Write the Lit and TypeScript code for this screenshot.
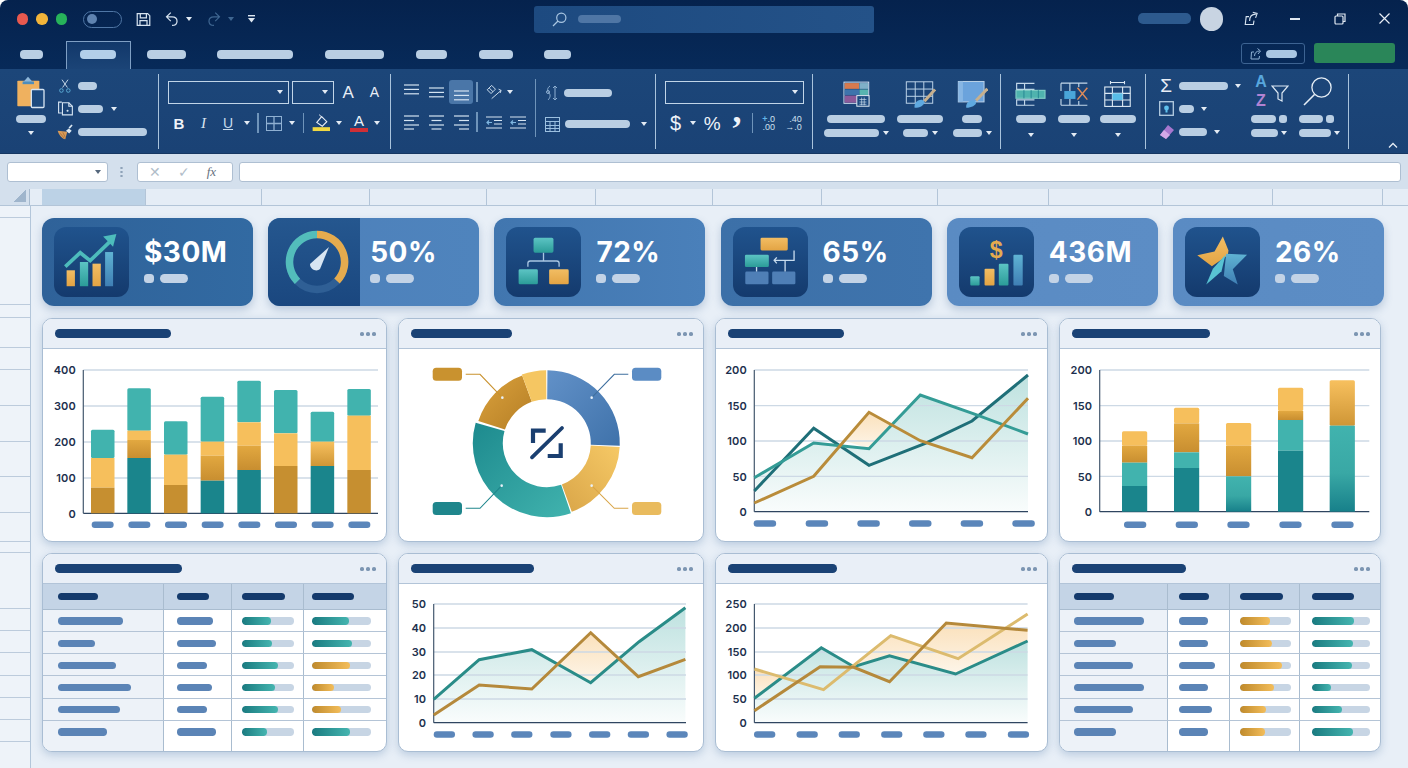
import { LitElement, html, svg, css } from "lit";
import { customElement } from "lit/decorators.js";

const pill = (w: number) => html`<span class="pill" style="width:${w}px"></span>`;
const caret = html`<span class="caret"></span>`;

/* ---------- ribbon icons ---------- */
const I = {
  save: html`<svg width="15" height="15" viewBox="406 35 49 47" fill="none" stroke="#d5e2ef" stroke-width="4"><path d="M410 39h34l7 7v32h-41z"/><path d="M420 39v14h20V39M419 78V62h23v16"/></svg>`,
  undo: html`<svg width="14" height="16" viewBox="492 34 46 50" fill="none" stroke="#d5e2ef" stroke-width="4"><path d="M511 38 497 52l14 14M497 52h18c22 0 22 28 0 28"/></svg>`,
  redo: html`<svg width="14" height="16" viewBox="602 34 46 50" fill="none" stroke="#3f6691" stroke-width="4"><path d="M629 38l14 14-14 14M643 52h-18c-22 0-22 28 0 28"/></svg>`,
  custom: html`<svg width="7" height="9" viewBox="0 0 7 9"><rect width="7" height="1.4" fill="#dfe8f2"/><path d="M0 3h7L3.5 7.5z" fill="#dfe8f2"/></svg>`,
  search: html`<svg width="15" height="15" viewBox="0 0 15 15" fill="none" stroke="#a9c6e2" stroke-width="1.2"><circle cx="9.3" cy="5.7" r="4.6"/><path d="M6 9 1 14"/></svg>`,
  share: html`<svg width="15" height="15" viewBox="730 35 48 46" fill="none" stroke="#d5e2ef" stroke-width="3.6"><path d="M746 52h-9l-3 25h26l2-12"/><path d="M748 66c0-14 8-22 20-22M758 38l14 4-5 14"/></svg>`,
  restore: html`<svg width="12" height="12" viewBox="0 0 12 12" fill="none" stroke="#dfe8f2" stroke-width="1.2"><rect x="1" y="3" width="8" height="8" rx="1"/><path d="M3.5 3V1h7.5v7.5H9"/></svg>`,
  close: html`<svg width="11" height="11" viewBox="0 0 11 11" stroke="#e8eef6" stroke-width="1.2"><path d="M.5.5l10 10M10.500.5l-10 10"/></svg>`,
  shareBtn: html`<svg width="12" height="12" viewBox="0 0 12 12" fill="none" stroke="#8fb0d2" stroke-width="1"><path d="M4 4H1.500L1 11h8l.5-3"/><path d="M4.500 8c0-3 2-5 5-5M7.500 .5l3 2.500-2.500 3"/></svg>`,
  clipboard: html`<svg width="30" height="33" viewBox="52 230 90 98"><rect x="56" y="244" width="66" height="76" rx="2" fill="#efb15f"/><path d="M70 252l18-20 18 20z" fill="#8fb7d9"/><rect x="72" y="246" width="34" height="8" fill="#4e8dbb"/><rect x="98" y="270" width="38" height="54" rx="3" fill="#1d4a7f" stroke="#d5e4f2" stroke-width="4"/></svg>`,
  cut: html`<svg width="12" height="16" viewBox="172 228 40 50" fill="none" stroke="#d5e4f2" stroke-width="3"><path d="M182 232l18 26M202 232l-18 26"/><g stroke="#5fb0d9"><circle cx="180" cy="268" r="6"/><circle cx="203" cy="268" r="6"/></g></svg>`,
  copy: html`<svg width="16" height="15" viewBox="166 303 50 46" fill="none" stroke="#d5e4f2" stroke-width="3.500"><path d="M181 306h-10v34h10"/><path d="M183 308h20l11 11v27h-31z"/><path d="M203 308v11h11"/><circle cx="199" cy="333" r="1.500" fill="#d5e4f2"/></svg>`,
  brush: html`<svg width="16" height="16" viewBox="168 372 50 48"><path d="M170 392l30 3-6 24c-12-3-20-14-24-27z" fill="#d79a58"/><path d="M196 392l9-7 9 7-8 9z" fill="#dbe7f1"/><path d="M206 384l9-10" stroke="#dbe7f1" stroke-width="5"/><path d="M178 400l13 16M186 397l8 16" stroke="#a56f3a" stroke-width="2.500"/></svg>`,
  borders: html`<svg width="16" height="15" viewBox="0 0 16 15" fill="none" stroke="#8fb0d2" stroke-width="1"><rect x=".5" y=".5" width="15" height="14"/><path d="M8 0v15M0 7.500h16" stroke-width="1.300"/></svg>`,
  fill: html`<svg width="18" height="18" viewBox="930 344 56 56"><path d="M945 370l15-18 16 16-14 14z" fill="none" stroke="#e8eef6" stroke-width="3.500"/><path d="M952 346l8 7" stroke="#e8eef6" stroke-width="3"/><rect x="932" y="385" width="54" height="12" fill="#f0d843"/></svg>`,
  orient: html`<svg width="17" height="16" viewBox="1452 250 54 50" fill="none" stroke="#d5e4f2" stroke-width="3"><path d="M1456 268l14-14 12 12-14 14zM1462 262l12 12"/><path d="M1470 296l30-26M1492 266l8 4-3 8"/></svg>`,
  wrap: html`<svg width="14" height="16" viewBox="0 0 14 16" fill="none" stroke="#8fb0d2" stroke-width="1"><path d="M5 1C2 3 2 6 4 8c2 2 1 5-1 7"/><path d="M10 1v14M8 3l2-2 2 2M8 13l2 2 2-2"/><circle cx="3" cy="7" r="1.500"/></svg>`,
  merge: html`<svg width="15" height="15" viewBox="0 0 15 15" fill="none" stroke="#9cc0e0" stroke-width="1"><rect x=".5" y=".5" width="14" height="14"/><path d="M0 4.500h15M0 8.500h15M0 11.500h15M5 4v11M10 4v11"/></svg>`,
  styles1: html`<svg width="27" height="27" viewBox="963 238 84 82"><rect x="966" y="242" width="77" height="66" fill="#1d4a7f" stroke="#d5e4f2" stroke-width="3"/><rect x="968" y="245" width="45" height="18" fill="#d67a4e"/><rect x="1014" y="245" width="27" height="18" fill="#7fb0c8"/><rect x="968" y="265" width="45" height="17" fill="#3e74ac"/><rect x="1014" y="265" width="27" height="17" fill="#58b4b0"/><rect x="968" y="284" width="40" height="22" fill="#8c5a9a"/><rect x="1006" y="284" width="38" height="33" fill="#1d4a7f" stroke="#e6eef6" stroke-width="3"/><path d="M1014 296h22M1014 304h22M1014 311h22M1021 290v24M1029 290v24" stroke="#d5e4f2" stroke-width="2"/></svg>`,
  styles2: html`<svg width="31" height="28" viewBox="1153 238 94 84" fill="none"><rect x="1157" y="243" width="80" height="65" stroke="#bcd3e8" stroke-width="3"/><path d="M1157 265h80M1157 287h80M1184 243v65M1210 243v65" stroke="#bcd3e8" stroke-width="3"/><path d="M1244 266l-32 36" stroke="#c7b08e" stroke-width="9"/><path d="M1182 322c-2-14 8-26 24-24l6 6c0 10-14 18-30 18z" fill="#5fa9e0"/></svg>`,
  styles3: html`<svg width="31" height="28" viewBox="1306 238 94 84" fill="none"><rect x="1310" y="242" width="78" height="62" fill="#6ba3dc" stroke="#bcd3e8" stroke-width="3"/><rect x="1310" y="242" width="14" height="62" fill="#87b6e4"/><path d="M1398 264l-34 36" stroke="#c7b08e" stroke-width="9"/><path d="M1334 322c-2-14 8-24 24-22l6 6c0 8-14 16-30 16z" fill="#5fa9e0"/></svg>`,
  ins: html`<svg width="31" height="24" viewBox="43 238 94 74" fill="none" stroke="#c3d8ea" stroke-width="3.500"><path d="M102 243H48v18h54M102 293H48v16h54"/><path d="M72 243v18M72 293v16"/><rect x="46" y="264" width="88" height="24" fill="#4fb3ae" stroke="#80ccc6"/><path d="M70 264v24M92 264v24M114 264v24" stroke="#2f8e98"/></svg>`,
  del: html`<svg width="29" height="25" viewBox="175 238 88 74" fill="none" stroke="#c3d8ea" stroke-width="3.500"><path d="M178 242h80M178 309h80M178 242v24M178 290v19M205 242v24M205 290v19M232 242v12M232 296v13"/><rect x="188" y="266" width="34" height="24" fill="#4aa6d9" stroke="none"/><path d="M228 256l30 36M258 256l-30 36" stroke="#dd8a5a" stroke-width="4.500"/></svg>`,
  format: html`<svg width="29" height="29" viewBox="306 230 88 88" fill="none" stroke="#dce8f3" stroke-width="3.500"><path d="M328 238h44M328 233v10M372 233v10"/><rect x="310" y="252" width="80" height="61"/><path d="M310 272h80M310 293h80M334 252v61M366 252v61"/><rect x="334" y="272" width="32" height="21" fill="#58bde8" stroke="none"/></svg>`,
  box: html`<svg width="15" height="15" viewBox="0 0 15 15" fill="none"><rect x=".7" y=".7" width="13.600" height="13.600" stroke="#b5cde2" stroke-width="1.300"/><circle cx="7.500" cy="7" r="2.400" fill="#5fc1ee"/><rect x="6.500" y="9" width="2" height="2.500" fill="#5fc1ee"/></svg>`,
  eraser: html`<svg width="15" height="14" viewBox="0 0 15 14"><path d="M9 0l6 5-8 9-6-4z" fill="#a777cf"/><path d="M1 10l4-5 6 5-4 4z" fill="#d3a9e8"/></svg>`,
  funnel: html`<svg class="fn" width="18" height="17" viewBox="0 0 18 17" fill="none" stroke="#dce8f3" stroke-width="1.200"><path d="M1 1h16l-6 7v8l-4-2V8z"/></svg>`,
  find: html`<svg width="29" height="29" viewBox="0 0 29 29" fill="none" stroke="#e6eef6" stroke-width="1.300"><circle cx="18.500" cy="10.500" r="9.600"/><path d="M11.500 17.500 1 28" stroke-width="1.600"/></svg>`,
  chevron: html`<svg width="10" height="6" viewBox="0 0 10 6" fill="none" stroke="#e6eef6" stroke-width="1.300"><path d="M1 5.500 5 1.500l4 4"/></svg>`,
};

/* horizontal-alignment icons: four lines, alternate ones short */
const alignIcon = (a: "l" | "c" | "r") =>
  html`<svg width="15" height="15" viewBox="0 0 15 15" stroke="#d5e4f2" stroke-width="1.200">${[1, 5.5, 10, 14].map((y, i) => {
    const w = i % 2 === 1 ? 10 : 15;
    const x = a === "l" ? 0 : a === "r" ? 15 - w : (15 - w) / 2;
    return svg`<line x1=${x} x2=${x + w} y1=${y} y2=${y} />`;
  })}</svg>`;
/* vertical-alignment icons: three lines that sit high, middle or low in the cell */
const vAlignIcon = (top: number) =>
  html`<svg width="15" height="20" viewBox="0 0 15 20" stroke="#d5e4f2" stroke-width="1.200">${[0, 4.4, 8.8].map(
    (d) => svg`<line x1="0" x2="15" y1=${top + d} y2=${top + d} />`,
  )}</svg>`;
const indentIcon = html`<svg width="16" height="13" viewBox="0 0 16 13" stroke="#d5e4f2" stroke-width="1.200"><path d="M0 1h16M8 4.500h8M8 8h8M0 12h16"/><path d="M6 6.500H1M3 4.500l-2 2 2 2" stroke="#7fb6e0" fill="none"/></svg>`;

/* ---------- KPI icons (drawn in reference-zoom units) ---------- */
const tile = (x: number, body: unknown) =>
  html`<svg width="75" height="70" viewBox="${x} 65 226 210">${body}</svg>`;
const defsKpi = (id: string) => svg`<defs>
  <linearGradient id="t${id}" x1="0" y1="0" x2="0" y2="1"><stop offset="0" stop-color="#5cc4c4"/><stop offset="1" stop-color="#2b9c98"/></linearGradient>
  <linearGradient id="o${id}" x1="0" y1="0" x2="0" y2="1"><stop offset="0" stop-color="#f2bd63"/><stop offset="1" stop-color="#e3a444"/></linearGradient>
  <linearGradient id="b${id}" x1="0" y1="0" x2="0" y2="1"><stop offset="0" stop-color="#5fb3d3"/><stop offset="1" stop-color="#3f7fb4"/></linearGradient>
</defs>`;
const kpiIcons = [
  tile(162, svg`${defsKpi("a")}
    <rect x="200" y="195" width="25" height="48" fill="url(#oa)"/><rect x="240" y="170" width="25" height="73" fill="url(#ta)"/>
    <rect x="278" y="175" width="25" height="68" fill="url(#oa)"/><rect x="316" y="140" width="24" height="103" fill="url(#ba)"/>
    <path d="M196 184l45-42 30 24 58-56" fill="none" stroke="#4dbcbc" stroke-width="11"/><path d="M350 86l-40 7 30 31z" fill="#4dbcbc"/>`),
  html`<svg width="70" height="70" viewBox="0 0 70 70" fill="none">
    <circle cx="35" cy="35" r="27.500" stroke="#2f5f95" stroke-width="7.500"/>
    <path d="M15.500 54.400A27.500 27.500 0 0 1 35 7.500" stroke="#53bdbb" stroke-width="7.500"/>
    <path d="M35 7.500A27.500 27.500 0 0 1 55 54" stroke="#e5ab4e" stroke-width="7.500"/>
    <path d="M47 20 38 42c-3 3-10 1-10-5z" fill="#d8e5f2"/></svg>`,
  tile(47, svg`${defsKpi("c")}
    <rect x="130" y="97" width="60" height="45" rx="5" fill="url(#tc)"/><rect x="85" y="192" width="58" height="45" rx="4" fill="url(#tc)"/><rect x="177" y="192" width="59" height="45" rx="4" fill="url(#oc)"/>
    <path d="M160 142v25M113 184v-10q0-7 7-7h80q7 0 7 7v10" fill="none" stroke="#a9c6e2" stroke-width="4"/>`),
  tile(725, svg`${defsKpi("d")}
    <rect x="808" y="97" width="82" height="38" rx="4" fill="url(#od)"/><rect x="761" y="148" width="72" height="37" rx="4" fill="url(#td)"/>
    <rect x="762" y="199" width="70" height="38" rx="4" fill="#4f7fb6"/><rect x="843" y="199" width="70" height="38" rx="4" fill="#4f7fb6"/>
    <path d="M909 135v30h-60M857 156l-8 9 8 9M882 165v34M796 185v14" fill="none" stroke="#c8dcee" stroke-width="4"/>`),
  tile(53, svg`${defsKpi("e")}
    <text x="165" y="157" text-anchor="middle" class="dollar">$</text>
    <rect x="87" y="213" width="28" height="28" rx="3" fill="url(#te)"/><rect x="130" y="190" width="30" height="51" rx="3" fill="url(#oe)"/>
    <rect x="173" y="175" width="29" height="66" rx="3" fill="url(#te)"/><rect x="217" y="148" width="28" height="93" rx="3" fill="url(#be)"/>`),
  tile(731, svg`${defsKpi("f")}
    <path d="M845 93l17 42-2 15-48 33-44-33 52-12z" fill="url(#of)"/>
    <path d="M855 145l63 3-43 44 15 46-42-26z" fill="url(#bf)"/><path d="M795 238l20-48 38-42-12 50z" fill="#58c3d3"/>`),
];

/* ---------- charts ---------- */
const C = { teal: "#41b3ae", dteal: "#1a858c", yel: "#f6bf5c", gold: "#c68f30" };
const colX = [42, 398, 715, 1059];
const colW = [345, 306, 333, 322];

type Seg = [number, number, string];

function frame(col: number, top: number, h: number, body: unknown) {
  return html`<svg class="plot" width=${colW[col] - 2} height=${h} viewBox="${colX[col] + 1} ${top} ${colW[col] - 2} ${h}">
    <defs>
      <linearGradient id="area" x1="0" y1="0" x2="0" y2="1"><stop offset="0" stop-color="#3aa6a0" stop-opacity=".33"/><stop offset="1" stop-color="#3aa6a0" stop-opacity=".03"/></linearGradient>
      <linearGradient id="warm" x1="0" y1="0" x2="0" y2="1"><stop offset="0" stop-color="#f6c277" stop-opacity=".5"/><stop offset="1" stop-color="#f6c277" stop-opacity=".16"/></linearGradient>
      <linearGradient id="tealfade" x1="0" y1="0" x2="0" y2="1"><stop offset="0" stop-color="#41b3ae"/><stop offset=".55" stop-color="#39a8a5"/><stop offset="1" stop-color="#17808a"/></linearGradient>
      <linearGradient id="goldfade" x1="0" y1="0" x2="0" y2="1"><stop offset="0" stop-color="#e2a840"/><stop offset="1" stop-color="#c88e30"/></linearGradient>
      <linearGradient id="yelfade" x1="0" y1="0" x2="0" y2="1"><stop offset="0" stop-color="#f7c05e"/><stop offset="1" stop-color="#cf9636"/></linearGradient>
      <linearGradient id="blue" x1="0" y1="0" x2="1" y2="1"><stop offset="0" stop-color="#6291c8"/><stop offset="1" stop-color="#3f72aa"/></linearGradient>
      <linearGradient id="yelseg" x1="1" y1="0" x2="0" y2="1"><stop offset="0" stop-color="#f6c966"/><stop offset="1" stop-color="#d9a548"/></linearGradient>
      <linearGradient id="tealseg" x1="0" y1="0" x2="1" y2="1"><stop offset="0" stop-color="#1d8a8e"/><stop offset="1" stop-color="#41b3ae"/></linearGradient>
      <linearGradient id="goldseg" x1="1" y1="1" x2="0" y2="0"><stop offset="0" stop-color="#b57e25"/><stop offset="1" stop-color="#dba23d"/></linearGradient>
    </defs>${body}</svg>`;
}

function axes(x0: number, x1: number, ticks: [string, number][]) {
  const base = ticks[ticks.length - 1][1];
  return svg`
    ${ticks.slice(0, -1).map(([, y]) => svg`<line x1=${x0} x2=${x1} y1=${y} y2=${y} stroke="#cdd9e5" stroke-width="1.300"/>`)}
    ${ticks.map(([t, y]) => svg`<text class="tick" x=${x0 - 7.500} y=${y + 4.200} text-anchor="end">${t}</text>`)}
    <line x1=${x0} x2=${x0} y1=${ticks[0][1]} y2=${base} stroke="#44586e" stroke-width="1.200"/>
    <line x1=${x0} x2=${x1} y1=${base} y2=${base} stroke="#2f4560" stroke-width="1.300"/>`;
}
const xPills = (xs: number[], w: number, y: number) =>
  xs.map((x) => svg`<rect x=${x} y=${y} width=${w} height="6.500" rx="3.200" fill="#5b86ba"/>`);

function barChart(col: number, top: number, h: number, ox: number, x0: number, x1: number, ticks: [string, number][], bw: number, bars: [number, Seg[]][], labels: number[], lw: number) {
  const m = (z: number) => z / 3 + 315;
  return frame(col, top, h, svg`
    ${axes(x0, x1, ticks)}
    ${bars.map(([bx, segs]) => svg`
      ${segs.map(([a, b, f], i) => svg`<rect x=${bx / 3 + ox} y=${m(a)} width=${bw} height=${(b - a) / 3} fill=${f} rx=${i === 0 ? 1.500 : 0}/>`)}`)}
    ${xPills(labels.map((x) => x / 3 + ox), lw, 521.4)}`);
}

const pts = (a: number[][], ox: number, oy: number, sx: number) =>
  a.map(([x, y]) => `${(x / sx + ox).toFixed(1)},${(y / 3 + oy).toFixed(1)}`).join(" ");

function lineChart(col: number, top: number, h: number, ox: number, oy: number, sx: number, x0: number, x1: number, ticks: [string, number][], areas: [number[][], string][], lines: [number[][], string][], labels: number[], lw: number, ly: number) {
  return frame(col, top, h, svg`
    ${areas.map(([a, f]) => svg`<polygon points=${pts(a, ox, oy, sx)} fill=${f}/>`)}
    ${axes(x0, x1, ticks)}
    ${lines.map(([a, c]) => svg`<polyline points=${pts(a, ox, oy, sx)} fill="none" stroke=${c} stroke-width="3"/>`)}
    ${xPills(labels.map((x) => x / sx + ox), lw, ly)}`);
}

const arc = (cx: number, cy: number, R: number, r: number, a: number, b: number) => {
  const p = (rad: number, d: number) => {
    const t = ((d - 90) * Math.PI) / 180;
    return `${(cx + rad * Math.cos(t)).toFixed(2)} ${(cy + rad * Math.sin(t)).toFixed(2)}`;
  };
  const lg = b - a > 180 ? 1 : 0;
  return `M${p(R, a)}A${R} ${R} 0 ${lg} 1 ${p(R, b)}L${p(r, b)}A${r} ${r} 0 ${lg} 0 ${p(r, a)}Z`;
};

const donut = () => {
  const z = (x: number, y: number) => `${(x / 3 + 395).toFixed(1)} ${(y / 3 + 315).toFixed(1)}`;
  const cx = 546.8, cy = 443.2, R = 73, r = 44;
  const leg = (x: number, y: number, f: string) => svg`<rect x=${x} y=${y} width="29.300" height="13" rx="3.500" fill=${f}/>`;
  const lead = (d: string, c: string) => svg`<path d=${d} fill="none" stroke=${c} stroke-width="1.100"/>`;
  const tip = (x: number, y: number) => svg`<circle cx=${x / 3 + 395} cy=${y / 3 + 315} r="1.300" fill="#e8f1f8"/>`;
  return frame(1, 349, 192, svg`
    <path d=${arc(cx, cy, R, r, 0.5, 92)} fill="url(#blue)"/>
    <path d=${arc(cx, cy, R, r, 93, 160)} fill="url(#yelseg)"/>
    <path d=${arc(cx, cy, R + 1, r, 161, 286)} fill="url(#tealseg)"/>
    <path d=${arc(cx, cy, R - 1, r, 288, 340)} fill="url(#goldseg)"/>
    <path d=${arc(cx, cy, R, r, 340, 359.500)} fill="#f5c662"/>
    ${leg(432.700, 367.700, "#c9922f")}${leg(632, 367.700, "#5b8cc4")}${leg(432.700, 502, "#1f868c")}${leg(632, 502, "#e9bb5e")}
    ${lead(`M${z(212, 178)}L${z(255, 178)}L${z(322, 248)}`, "#c9922f")}
    ${lead(`M${z(700, 178)}L${z(658, 178)}L${z(590, 248)}`, "#3f6f9f")}
    ${lead(`M${z(212, 580)}L${z(255, 580)}L${z(320, 512)}`, "#1f868c")}
    ${lead(`M${z(700, 580)}L${z(658, 580)}L${z(590, 512)}`, "#d9a548")}
    ${tip(322, 248)}${tip(590, 248)}${tip(320, 512)}${tip(590, 512)}
    <path d="M${z(452, 347)}L${z(414, 347)}L${z(414, 384)}" fill="none" stroke="#1a3f70" stroke-width="4.200"/>
    <path d="M${z(497, 385)}L${z(497, 423)}L${z(458, 423)}" fill="none" stroke="#1a3f70" stroke-width="4.200"/>
    <path d="M${z(411, 427)}L${z(501, 339)}" fill="none" stroke="#1a3f70" stroke-width="3.800" stroke-linecap="round"/>`);
};

/* tables */
type Bar = [number, "t" | "g"];
interface Tbl { cols: number[]; pad: number[]; head: number[]; c1: number[]; c2: number[]; t3: number; t4: number; c3: Bar[]; c4: Bar[]; }
const T1: Tbl = {
  cols: [121, 67.6, 72.7, 82.7], pad: [14.6, 13.3, 10.7, 8],
  head: [40, 32, 42.500, 42], c1: [65, 37, 58, 73, 62, 49], c2: [36, 39, 30, 35, 30, 39], t3: 52, t4: 59,
  c3: [[29, "t"], [30, "t"], [36, "t"], [33, "t"], [36, "t"], [25, "t"]],
  c4: [[37, "t"], [40, "t"], [38, "g"], [22, "g"], [29, "g"], [38, "t"]],
};
const T2: Tbl = {
  cols: [107.5, 62, 70, 80.5], pad: [14, 11, 10.500, 12.500],
  head: [40, 30, 43, 42], c1: [70, 42, 59, 70, 59, 42], c2: [29, 29, 36, 29, 33, 29], t3: 51, t4: 58,
  c3: [[30, "g"], [32, "g"], [42, "g"], [34, "g"], [26, "g"], [25, "g"]],
  c4: [[42, "t"], [41, "t"], [40, "t"], [19, "t"], [30, "t"], [41, "t"]],
};

const rowLines = [217.3, 305, 318, 348, 370, 405.7, 441.7, 477, 513, 541.7, 553, 609, 631, 653, 675.7, 698, 720, 741.7];
const colLines = [146, 262, 370, 487, 596, 713, 822, 938, 1049, 1163, 1273, 1383];
const tabs = [[20.3, 23], [80.3, 36, 1], [147.3, 38.4], [217.3, 76], [325.3, 59], [416.3, 31], [479, 33.700], [544.3, 27]];

@customElement("app-root")
export class AppRoot extends LitElement {
  static styles = css`
    :host { display: block; width: 1408px; height: 768px; overflow: hidden; font-family: "Liberation Sans", sans-serif; background: #fff; }
    .pill { display: block; height: 8px; border-radius: 4px; background: #b9cee3; flex: none; }
    .caret { display: block; flex: none; width: 0; height: 0; border-left: 3px solid transparent; border-right: 3px solid transparent; border-top: 4px solid #e3ebf4; }
    svg { display: block; flex: none; }

    /* title bar */
    .top { background: linear-gradient(#05224d, #072a59); border-radius: 8px 8px 0 0; }
    .title { height: 38px; display: grid; grid-template-columns: 534px 340.3px 1fr; align-items: center; }
    .tleft, .tright { display: flex; align-items: center; }
    .lights { display: flex; gap: 8px; margin-left: 16.500px; }
    .lights i { display: block; width: 11.500px; height: 11.500px; border-radius: 50%; }
    .toggle { width: 39px; height: 17px; margin-left: 16px; box-sizing: border-box; border: 1px solid #4f76a5; border-radius: 9px; display: flex; align-items: center; padding-left: 3px; }
    .toggle i { display: block; width: 10px; height: 10px; border-radius: 50%; background: #5f83b0; }
    .m14 { margin-left: 14px; } .m7 { margin-left: 7px; } .m16 { margin-left: 15px; }
    .dim { border-top-color: #3f6691; }
    .searchbox { height: 27px; background: linear-gradient(90deg, #1d4a80, #245288); border-radius: 3px; display: flex; align-items: center; padding-left: 18px; gap: 11px; }
    .searchbox .pill { background: #4f76a5; }
    .who { width: 53px; height: 11px; border-radius: 5px; background: #2d5a8e; margin-left: 264px; }
    .avatar { width: 23.400px; height: 23.400px; border-radius: 50%; background: #c8d4e2; margin-left: 8.600px; }
    .sh { margin-left: 21px; } .minim { width: 10px; height: 1.200px; background: #dfe8f2; margin-left: 31px; } .rs { margin-left: 34px; } .cl { margin-left: 33px; }

    .tabs { height: 31px; display: flex; align-items: flex-start; }
    .tab { margin-top: 12px; height: 8.700px; border-radius: 4px; background: #b9cee3; flex: none; }
    .tab.on { background: #b3cfe9; }
    .tabbox { flex: none; box-sizing: border-box; height: 28.300px; margin-top: 2.700px; border: 1px solid #7f9fc4; border-bottom: none; background: linear-gradient(#12386a, #1b4477); padding: 8.500px 0 0 13.300px; }
    .tabbox .tab { margin-top: 0; }
    .tabend { margin-left: auto; display: flex; gap: 9px; padding: 5.300px 13.300px 0 0; }
    .sharebtn { width: 64px; height: 20.700px; box-sizing: border-box; border: 1px solid #3d6392; border-radius: 3px; display: flex; align-items: center; padding-left: 8px; gap: 4px; }
    .sharebtn .pill { background: #a9c6e2; }
    .green { width: 80.400px; height: 20px; background: #2a8659; border-radius: 3px; }

    /* ribbon */
    .ribbon { height: 85px; box-sizing: border-box; padding-top: 5px; display: flex; background: linear-gradient(#1c4679, #1a4275); border-bottom: 1px solid #153661; }
    .grp { height: 75px; box-sizing: border-box; border-right: 1.500px solid #a9c3dc; flex: none; }
    .clipgrp { width: 159px; display: flex; padding-left: 16px; }
    .clipcol { width: 30px; display: flex; flex-direction: column; align-items: center; padding-top: 2px; }
    .clipcol .pill { margin-top: 6px; width: 30px; }
    .clipcol .caret { margin-top: 8px; }
    .tools { margin-left: 11px; }
    .ir { display: flex; align-items: center; height: 23px; gap: 8px; }
    .ir .ic { width: 15.500px; display: flex; justify-content: center; margin-right: -3px; flex: none; }

    .fontgrp { width: 232px; padding: 7px 0 0 8.500px; }
    .fontrow { display: flex; align-items: center; gap: 3px; }
    .sel { height: 22.700px; box-sizing: border-box; border: 1.300px solid #c1d5e8; display: flex; align-items: center; justify-content: flex-end; padding-right: 5px; }
    .gA { color: #e8eef6; line-height: 1; }
    .gA.big { font-size: 17px; margin-left: 6px; }
    .gA.small { font-size: 14px; margin-left: 13px; }
    .fontgrid { display: grid; grid-template-columns: 24px 25px 24px 13px 10px 22px 14px 9px 25px 12px 28px 8px; justify-items: center; align-items: center; height: 25px; margin-top: 7px; margin-left: -.500px; }
    .b { font-weight: 700; font-size: 15px; color: #eef3f9; }
    .i { font-style: italic; font-size: 15px; color: #dbe6f1; font-family: "Liberation Serif", serif; }
    .u { text-decoration: underline; font-size: 14px; color: #c6daec; }
    .vs { width: 1.300px; height: 20px; background: #6f94ba; }
    .colorA { display: flex; flex-direction: column; align-items: center; font-size: 15px; line-height: 14px; color: #eef3f9; }
    .colorA i { display: block; width: 18px; height: 4px; background: #cf2f36; }

    .aligngrp { width: 265px; display: flex; padding-left: 8px; }
    .ablock { width: 136px; padding-top: 6px; }
    .agrid1, .agrid2 { display: grid; justify-items: center; align-items: center; }
    .agrid1 { grid-template-columns: 24px 26px 24px 8px 26px 6px; height: 24.400px; }
    .agrid2 { grid-template-columns: 24px 26px 24px 8px 25px 24px; height: 24px; margin-top: 6px; }
    .active { width: 24px; height: 24.400px; background: #4a76a8; border-radius: 3px; display: flex; align-items: center; justify-content: center; }
    .subsep { width: 1.300px; height: 58px; background: #6f94ba; margin-top: 5px; flex: none; }
    .wrapcol { margin-left: 9px; padding-top: 7px; }
    .wr { display: flex; align-items: center; gap: 5px; height: 24px; }
    .wr + .wr { margin-top: 7px; }
    .wr .caret { margin-left: 6px; }

    .numgrp { width: 157px; padding: 7px 0 0 8.600px; }
    .numgrid { display: grid; grid-template-columns: 22px 13px 25px 25px 6.500px 25px 25px; justify-items: center; align-items: center; height: 25px; margin-top: 7px; }
    .cur { color: #eef3f9; font-size: 20px; line-height: 1; }
    .pct { color: #eef3f9; font-size: 19px; line-height: 1; }
    .comma { color: #eef3f9; font-size: 36px; line-height: 25px; font-weight: 700; font-family: "Liberation Serif", serif; transform: translateY(-13px); }
    .dec { color: #cfe0ef; font-size: 9px; line-height: 8.500px; text-align: right; }
    .dec b { color: #62b5e8; font-weight: 700; }

    .stackgrp { display: flex; padding: 0 0 0 8px; }
    .styles { width: 188px; } .cells { width: 145px; }
    .sc { display: flex; flex-direction: column; align-items: center; padding-top: 6px; flex: none; }
    .sc > svg { height: 28px; }
    .sc .r1 { margin-top: 7px; }
    .sc .r2 { margin-top: 6px; display: flex; align-items: center; gap: 4px; }
    .w70 { width: 70px; } .w58 { width: 58px; } .w46 { width: 46px; }
    .w43 { width: 43px; } .w44 { width: 44px; }
    .sc .under { margin-top: 10px; }

    .editgrp { width: 203px; display: flex; padding-left: 13px; }
    .ecol { width: 92px; flex: none; }
    .ecol .ir { gap: 6px; }
    .ecol .ir .ic { width: 14px; margin: 0; }
    .ecol .ir .caret { margin-left: 1px; }
    .sortcol { width: 48px; flex: none; padding-top: 3px; display: flex; flex-direction: column; gap: 6px; }
    .findcol { width: 40px; }
    .az { display: flex; align-items: flex-end; height: 29px; gap: 1px; }
    .az.findbox { padding-left: 3.500px; }
    .az .fn { margin-bottom: 4px; }
    .azt { display: flex; flex-direction: column; font: 700 16px/18.500px "Liberation Sans", sans-serif; width: 12px; align-items: center; align-self: flex-start; margin: -4px 3px 0 4px; }
    .azt b:first-child { color: #58a7dd; } .azt b:last-child { color: #b183d3; }
    .pr { display: flex; align-items: center; gap: 3px; }
    .pr.first { margin-top: 3px; }
    .dot { width: 8px; height: 8px; border-radius: 3px; background: #b9cee3; }
    .collapse { margin: 68px 0 0 39px; }

    /* formula bar */
    .formula { height: 35px; background: #d4e0ed; box-sizing: border-box; padding: 7.700px 6.700px 0; display: flex; }
    .fbox { height: 20.700px; box-sizing: border-box; background: #fff; border: 1px solid #aebfd2; border-radius: 3px; display: flex; align-items: center; }
    .name { width: 101px; justify-content: flex-end; padding-right: 6px; }
    .name .caret { border-top-color: #55677c; border-left-width: 3.500px; border-right-width: 3.500px; }
    .vdots { width: 3px; margin: 4px 13.500px 0 12.500px; height: 12px; background: radial-gradient(circle, #8ea2b8 1px, transparent 1.300px) 0 0/3px 4px; }
    .fbtns { width: 96.600px; padding-left: 11px; gap: 17px; color: #b1bdc9; font-size: 14px; }
    .fbtns em { font-family: "Liberation Serif", serif; color: #66717e; font-size: 13px; }
    .finput { width: 1162.700px; margin-left: 5.400px; }

    /* sheet */
    .colhead { height: 17px; display: flex; box-sizing: border-box; background: #e5edf6; border-bottom: 1px solid #b3c5d8; }
    .corner { width: 30px; flex: none; background: #d4e0ed; border-right: 1px solid #a8bbcf; box-sizing: border-box; display: flex; justify-content: flex-end; padding: 1px 3px 0 0; }
    .tri { width: 12px; height: 12px; background: linear-gradient(135deg, transparent 50%, #9fb5cc 50%); }
    .gap12 { width: 12px; flex: none; box-sizing: border-box; }
    .chead { box-sizing: border-box; border-right: 1px solid #b3c5d8; flex: none; }
    .chead.sel1 { background: #bcd2e6; }
    .sheet { display: flex; height: 562.700px; background: #e8eff7; }
    .rows { width: 31px; flex: none; box-sizing: border-box; border-right: 1.500px solid #b3c6da; background: #eef3f9; }
    .rowline { box-sizing: border-box; border-bottom: 1px solid #bccbdc; }
    .content { padding: 12.300px 0 0 11px; }
    .kpis { display: grid; grid-template-columns: repeat(6, 211px); gap: 15.200px; }
    .kpi { height: 88px; border-radius: 12px; box-sizing: border-box; padding: 8.700px 0 0 12px; display: flex; box-shadow: 0 4px 9px rgba(60, 100, 150, .28); color: #fff; overflow: hidden; }
    .kpi.gauge { padding: 0; }
    .tile { width: 75px; height: 70px; border-radius: 12px; background: linear-gradient(#20538d, #143a6d); flex: none; }
    .gaugebox { width: 92px; height: 88px; box-sizing: border-box; padding-left: 5px; background: linear-gradient(#25578f, #1a477f); flex: none; display: flex; align-items: center; justify-content: center; margin-right: 10px; }
    .ktext { margin-left: 15px; padding-top: 8px; }
    .gauge .ktext { margin-left: 0; padding-top: 17px; }
    .num { font: 700 28px/34px Inter, "Liberation Sans", sans-serif; letter-spacing: .5px; }
    .sub { display: flex; gap: 6px; margin-top: 5px; }
    .sub i { display: block; height: 9px; border-radius: 3.500px; background: #c3d3e6; width: 10px; }
    .sub i + i { width: 28px; border-radius: 4.500px; }

    .grid { display: grid; grid-template-columns: 345px 306px 333px 322px; grid-template-rows: 223.500px 199px; column-gap: 11px; row-gap: 11.500px; margin-top: 12px; }
    .card { background: #fff; border: 1px solid #a9bdd3; border-radius: 10px; box-sizing: border-box; overflow: hidden; box-shadow: 0 3px 8px rgba(70, 110, 160, .28); }
    .chd { height: 30px; box-sizing: border-box; background: #e9eff7; border-bottom: 1.500px solid #b2c4d8; display: flex; align-items: center; justify-content: space-between; padding: 0 10px 0 12px; }
    .ttl { display: block; height: 8.700px; border-radius: 4.300px; background: #1a4275; }
    .dots { display: flex; gap: 2.300px; }
    .dots i { display: block; width: 3.700px; height: 3.700px; border-radius: 50%; background: #7c95b2; }
    .plot .tick { font: 600 11px Inter, "Liberation Sans", sans-serif; fill: #1c2f4d; letter-spacing: .1px; }
    .dollar { font: 700 70px "Liberation Sans", sans-serif; fill: #e5ab4e; }

    .thead, .trow { display: grid; }
    .thead { height: 25.600px; background: #c4d4e6; border-bottom: 1px solid #a9bccf; box-sizing: border-box; }
    .thead > div { display: flex; align-items: center; border-right: 1px solid #a9bccf; box-sizing: border-box; }
    .thead > div:last-child, .trow > div:last-child { border-right: none; }
    .thead .tp { height: 7.300px; border-radius: 3.700px; background: #143a6c; display: block; }
    .trow { height: 22.200px; border-bottom: 1px solid #b4c4d6; box-sizing: border-box; }
    .trow.last { height: 31px; border-bottom: none; }
    .trow > div { border-right: 1px solid #a9bccf; box-sizing: border-box; padding-top: 7.500px; }
    .trow > div:first-child { background: #edf2f8; }
    .tp { height: 7.300px; border-radius: 3.700px; background: #5b84b6; display: block; }
    .track { height: 7.300px; border-radius: 3.700px; background: #c7d5e4; display: block; overflow: hidden; }
    .track i { display: block; height: 100%; border-radius: 3.700px; }
    .track i.t { background: linear-gradient(90deg, #1a7b80, #45b5b0); }
    .track i.g { background: linear-gradient(90deg, #bf8a2c, #f3bd5a); }
  `;

  private card(w: number, body: unknown) {
    return html`<div class="card">
      <div class="chd"><span class="ttl" style="width:${w}px"></span><span class="dots"><i></i><i></i><i></i></span></div>
      ${body}
    </div>`;
  }

  private table(t: Tbl) {
    const gc = `grid-template-columns:${t.cols.map((c) => c + "px").join(" ")}`;
    const pad = (i: number) => `padding-left:${t.pad[i]}px`;
    const bar = (b: Bar, w: number) => html`<span class="track" style="width:${w}px"><i class=${b[1]} style="width:${b[0]}px"></i></span>`;
    return html`
      <div class="thead" style=${gc}>${t.head.map((w, i) => html`<div style=${pad(i)}><span class="tp" style="width:${w}px"></span></div>`)}</div>
      ${t.c1.map((v, r) => html`<div class="trow ${r === 5 ? "last" : ""}" style=${gc}>
        <div style=${pad(0)}><span class="tp" style="width:${v}px"></span></div>
        <div style=${pad(1)}><span class="tp" style="width:${t.c2[r]}px"></span></div>
        <div style=${pad(2)}>${bar(t.c3[r], t.t3)}</div>
        <div style=${pad(3)}>${bar(t.c4[r], t.t4)}</div>
      </div>`)}`;
  }

  private ribbon() {
    return html`<div class="ribbon">
      <div class="grp clipgrp">
        <div class="clipcol">${I.clipboard}${pill(30)}${caret}</div>
        <div class="tools">
          <div class="ir"><span class="ic">${I.cut}</span>${pill(19)}</div>
          <div class="ir"><span class="ic">${I.copy}</span>${pill(25)}${caret}</div>
          <div class="ir"><span class="ic">${I.brush}</span>${pill(69)}</div>
        </div>
      </div>
      <div class="grp fontgrp">
        <div class="fontrow">
          <div class="sel" style="width:121px">${caret}</div>
          <div class="sel" style="width:42px">${caret}</div>
          <span class="gA big">A</span><span class="gA small">A</span>
        </div>
        <div class="fontgrid">
          <span class="b">B</span><span class="i">I</span><span class="u">U</span>${caret}<span class="vs"></span>
          ${I.borders}${caret}<span class="vs"></span>${I.fill}${caret}
          <span class="colorA">A<i></i></span>${caret}
        </div>
      </div>
      <div class="grp aligngrp">
        <div class="ablock">
          <div class="agrid1">
            ${vAlignIcon(3)}${vAlignIcon(6)}<span class="active">${vAlignIcon(9)}</span><span class="vs"></span>${I.orient}${caret}
          </div>
          <div class="agrid2">
            ${alignIcon("l")}${alignIcon("c")}${alignIcon("r")}<span class="vs"></span>${indentIcon}${indentIcon}
          </div>
        </div>
        <span class="subsep"></span>
        <div class="wrapcol">
          <div class="wr">${I.wrap}${pill(48)}</div>
          <div class="wr">${I.merge}${pill(65)}${caret}</div>
        </div>
      </div>
      <div class="grp numgrp">
        <div class="sel" style="width:139px">${caret}</div>
        <div class="numgrid">
          <span class="cur">$</span>${caret}<span class="pct">%</span><span class="comma">,</span><span class="vs"></span>
          <span class="dec"><b>+</b>.0<br />.00</span><span class="dec">.40<br />→.0</span>
        </div>
      </div>
      <div class="grp stackgrp styles">
        <div class="sc w70">${I.styles1}<span class="pill r1" style="width:58px"></span><div class="r2">${pill(55)}${caret}</div></div>
        <div class="sc w58">${I.styles2}<span class="pill r1" style="width:46px"></span><div class="r2">${pill(25)}${caret}</div></div>
        <div class="sc w46">${I.styles3}<span class="pill r1" style="width:20px"></span><div class="r2">${pill(29)}${caret}</div></div>
      </div>
      <div class="grp stackgrp cells">
        <div class="sc w43">${I.ins}<span class="pill r1" style="width:30px"></span><span class="caret under"></span></div>
        <div class="sc w44">${I.del}<span class="pill r1" style="width:32px"></span><span class="caret under"></span></div>
        <div class="sc w43">${I.format}<span class="pill r1" style="width:36px"></span><span class="caret under"></span></div>
      </div>
      <div class="grp editgrp">
        <div class="ecol">
          <div class="ir"><span class="ic" style="color:#e8eef6;font-size:19px">Σ</span>${pill(49)}${caret}</div>
          <div class="ir"><span class="ic">${I.box}</span>${pill(15)}${caret}</div>
          <div class="ir"><span class="ic">${I.eraser}</span>${pill(28)}${caret}</div>
        </div>
        <div class="sortcol">
          <div class="az"><span class="azt"><b>A</b><b>Z</b></span>${I.funnel}</div>
          <div class="pr first">${pill(25)}<span class="dot"></span></div>
          <div class="pr">${pill(27)}${caret}</div>
        </div>
        <div class="sortcol findcol">
          <div class="az findbox">${I.find}</div>
          <div class="pr first">${pill(24)}<span class="dot"></span></div>
          <div class="pr">${pill(32)}${caret}</div>
        </div>
      </div>
      <div class="collapse">${I.chevron}</div>
    </div>`;
  }

  render() {
    const kcolors = ["#2f6299,#326aa2", "#4d80ba,#4f84bd", "#4176af,#4a80ba", "#3c70a8,#3f74ad", "#5a8bc3,#5c8dc5", "#5a8bc3,#5c8dc5"];
    const kv = ["$30M", "50%", "72%", "65%", "436M", "26%"];
    let prevRow = 205.7;
    let prevCol = 42;

    const c1t: [string, number][] = [["400", 370], ["300", 406], ["200", 442], ["100", 478], ["0", 513.3]];
    const c3t: [string, number][] = [["200", 370], ["150", 405.7], ["100", 441], ["50", 476.3], ["0", 511.7]];
    const c6t: [string, number][] = [["50", 604], ["40", 628], ["30", 652], ["20", 675], ["10", 699], ["0", 722.7]];
    const c7t: [string, number][] = [["250", 604], ["200", 628], ["150", 652], ["100", 675], ["50", 699], ["0", 722.7]];
    const { teal: T, dteal: D, yel: Y, gold: G } = C;
    const F = "url(#goldfade)", YF = "url(#yelfade)", TF = "url(#tealfade)";

    return html`
      <div class="top">
        <div class="title">
          <div class="tleft">
            <div class="lights"><i style="background:#e8594f"></i><i style="background:#f2b53a"></i><i style="background:#27b35a"></i></div>
            <div class="toggle"><i></i></div>
            <span class="m14">${I.save}</span><span class="m14">${I.undo}</span><span class="m7">${caret}</span>
            <span class="m16">${I.redo}</span><span class="m7"><span class="caret dim"></span></span><span class="m14">${I.custom}</span>
          </div>
          <div class="searchbox">${I.search}<span class="pill" style="width:43px"></span></div>
          <div class="tright">
            <span class="who"></span><span class="avatar"></span><span class="sh">${I.share}</span><span class="minim"></span><span class="rs">${I.restore}</span><span class="cl">${I.close}</span>
          </div>
        </div>
        <div class="tabs">
          ${tabs.map(([x, w, on], i) => {
            const prev = i === 0 ? 0 : i === 2 ? 130.7 : (tabs[i - 1][0] as number) + (tabs[i - 1][1] as number);
            if (on) return html`<div class="tabbox" style="margin-left:${66 - prev}px;width:64.700px"><div class="tab on" style="width:${w}px"></div></div>`;
            return html`<div class="tab" style="margin-left:${(x as number) - prev}px;width:${w}px"></div>`;
          })}
          <div class="tabend">
            <div class="sharebtn">${I.shareBtn}<span class="pill" style="width:31px"></span></div>
            <div class="green"></div>
          </div>
        </div>
      </div>
      ${this.ribbon()}
      <div class="formula">
        <div class="fbox name">${caret}</div>
        <span class="vdots"></span>
        <div class="fbox fbtns"><span>✕</span><span>✓</span><em>fx</em></div>
        <div class="fbox finput"></div>
      </div>
      <div class="colhead">
        <div class="corner"><span class="tri"></span></div>
        <div class="gap12"></div>
        ${colLines.map((x, i) => {
          const w = x - prevCol;
          prevCol = x;
          return html`<div class="chead ${i === 0 ? "sel1" : ""}" style="width:${w}px"></div>`;
        })}
      </div>
      <div class="sheet">
        <div class="rows">
          ${rowLines.map((y) => {
            const h = y - prevRow;
            prevRow = y;
            return html`<div class="rowline" style="height:${h}px"></div>`;
          })}
        </div>
        <div class="content">
          <div class="kpis">
            ${kv.map((v, i) => html`<div class="kpi ${i === 1 ? "gauge" : ""}" style="background:linear-gradient(90deg,${kcolors[i]})">
              ${i === 1 ? html`<div class="gaugebox">${kpiIcons[1]}</div>` : html`<div class="tile">${kpiIcons[i]}</div>`}
              <div class="ktext"><div class="num">${v}</div><div class="sub"><i></i><i></i></div></div>
            </div>`)}
          </div>
          <div class="grid">
            ${this.card(116, barChart(0, 349, 192, 0, 83.3, 378, c1t, 23.5, [
              [273, [[344, 429, T], [429, 518, Y], [518, 595, G]]],
              [382, [[220, 347, T], [347, 375, Y], [375, 429, F], [429, 595, D]]],
              [492, [[319, 419, T], [419, 510, Y], [510, 595, G]]],
              [602, [[245, 380, T], [380, 422, Y], [422, 497, F], [497, 595, D]]],
              [712, [[197, 322, T], [322, 392, Y], [392, 465, F], [465, 595, D]]],
              [822, [[225, 355, T], [355, 453, Y], [453, 595, G]]],
              [932, [[290, 380, T], [380, 453, YF], [453, 595, D]]],
              [1042, [[222, 302, T], [302, 465, Y], [465, 595, G]]],
            ], [275, 385, 495, 605, 715, 825, 935, 1045], 22))}
            ${this.card(101, donut())}
            ${this.card(116, lineChart(2, 349, 192, 712, 315, 3, 754.3, 1028, c3t,
              [[[[127, 488], [305, 384], [471, 401], [625, 240], [800, 300], [948, 180], [948, 590], [127, 590]], "url(#area)"],
               [[[400, 378], [471, 292], [540, 330], [471, 401]], "url(#warm)"]],
              [[[[127, 528], [305, 340], [471, 451], [640, 385], [780, 318], [948, 180]], "#1f6f78"],
               [[[127, 488], [305, 384], [471, 401], [625, 240], [790, 298], [948, 357]], "#349c96"],
               [[[127, 564], [305, 484], [471, 292], [625, 377], [780, 428], [948, 250]], "#b98c3a"]],
              [125, 281, 436, 591, 746, 901], 22.5, 520.3))}
            ${this.card(137.5, barChart(3, 349, 192, 1050, 1099.7, 1369.3, c3t, 25.2, [
              [216, [[349, 392, Y], [392, 443, F], [443, 513, T], [513, 590, D]]],
              [372, [[278, 325, Y], [325, 412, F], [412, 459, T], [459, 590, D]]],
              [528, [[324, 392, Y], [392, 484, F], [484, 590, TF]]],
              [684, [[218, 288, Y], [288, 315, F], [315, 407, T], [407, 590, D]]],
              [839, [[196, 332, YF], [332, 590, TF]]],
            ], [222, 377, 532, 688, 844], 22.3))}
            ${this.card(127, this.table(T1))}
            ${this.card(123, lineChart(1, 584, 168, 395, 545, 2.376, 433.7, 686, c6t,
              [[[[92, 463], [200, 344], [325, 314], [465, 413], [580, 290], [690, 188], [690, 533], [92, 533]], "url(#area)"],
               [[[385, 352], [465, 263], [530, 340], [465, 413]], "url(#warm)"]],
              [[[[92, 463], [200, 344], [325, 314], [465, 413], [580, 290], [690, 188]], "#2a8c88"],
               [[[92, 510], [200, 420], [325, 432], [465, 263], [578, 395], [690, 343]], "#b5893b"]],
              [92, 184, 276, 369, 461, 553, 645], 21.3, 731.3))}
            ${this.card(109, lineChart(2, 584, 168, 395, 545, 2.376, 754.4, 1027.6, c7t,
              [[[[854, 460], [1013, 308], [1090, 365], [1175, 332], [1332, 387], [1503, 288], [1503, 533], [854, 533]], "url(#area)"],
               [[[854, 372], [915, 400], [854, 460]], "url(#warm)"],
               [[[1090, 365], [1178, 272], [1250, 305], [1310, 234], [1503, 256], [1503, 288], [1332, 387], [1175, 332]], "url(#warm)"]],
              [[[[854, 460], [1013, 308], [1090, 365], [1175, 332], [1332, 387], [1503, 288]], "#2a8c88"],
               [[[854, 372], [1018, 434], [1178, 272], [1338, 341], [1503, 207]], "#dcbb6e"],
               [[[854, 497], [1010, 365], [1090, 367], [1175, 410], [1310, 234], [1503, 256]], "#b5893b"]],
              [853, 954, 1054, 1155, 1255, 1355, 1456], 21.3, 731.3))}
            ${this.card(114, this.table(T2))}
          </div>
        </div>
      </div>
    `;
  }
}
